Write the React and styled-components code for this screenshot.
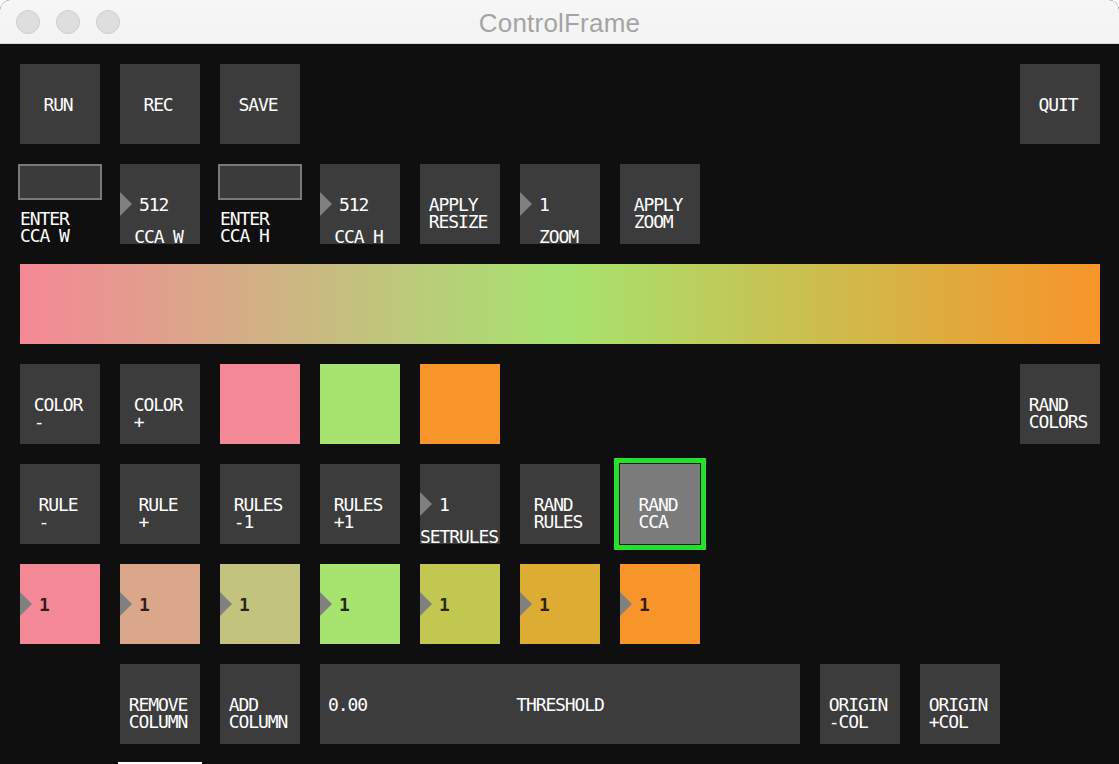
import React from "react";
import styled, { createGlobalStyle, css } from "styled-components";

const GlobalStyle = createGlobalStyle`
  html, body {
    margin: 0;
    padding: 0;
    background: #ffffff;
    overflow: hidden;
  }
  #root {
    width: 1119px;
    height: 764px;
  }
`;

const PIXEL_FONT = `"DejaVu Sans Mono", "Liberation Mono", monospace`;

const Window = styled.div`
  width: 1119px;
  height: 764px;
  display: flex;
  flex-direction: column;
  border-radius: 10px 10px 0 0;
  overflow: hidden;
  background: #0f0f0f;
`;

const TitleBar = styled.div`
  height: 43px;
  flex: none;
  border-bottom: 1px solid #d4d4d4;
  background: linear-gradient(#f6f6f6, #f3f3f3);
  display: grid;
  grid-template-columns: 1fr auto 1fr;
  align-items: center;
`;

const Lights = styled.div`
  display: flex;
  gap: 16px;
  padding-left: 16px;
`;

const Light = styled.span`
  width: 24px;
  height: 24px;
  box-sizing: border-box;
  border-radius: 50%;
  background: #dedede;
  border: 1px solid #cdcdcd;
`;

const Title = styled.div`
  font-family: "Liberation Sans", Arial, sans-serif;
  font-size: 26px;
  color: #a4a4a4;
  line-height: 1;
  padding-top: 2px;
  letter-spacing: 0.2px;
`;

const Canvas = styled.div`
  flex: 1;
  min-height: 0;
  padding: 20px 19px 0 20px;
  display: grid;
  grid-template-columns: repeat(11, 80px);
  grid-template-rows: repeat(8, 80px);
  gap: 20px;
`;

const place = css`
  grid-column: ${(p) => p.$col} / span ${(p) => p.$span || 1};
  grid-row: ${(p) => p.$row};
`;

const textStyle = css`
  font-family: ${PIXEL_FONT};
  font-size: 18px;
  letter-spacing: -1.1px;
  line-height: 17px;
  color: #ffffff;
`;

const Button = styled.div`
  ${place};
  ${textStyle};
  box-sizing: border-box;
  background: ${(p) => (p.$active ? "#7b7b7b" : "#3c3c3c")};
  padding: 32px 4px 0 0;
  display: flex;
  justify-content: center;
  align-items: flex-start;
  ${(p) =>
    p.$active &&
    css`
      box-shadow: 0 0 0 1px #1c1c1c, 0 0 0 6px #27e02b;
    `}
`;

const Label = styled.span`
  white-space: pre;
  text-align: left;
`;

const FieldCell = styled.div`
  ${place};
  display: flex;
  flex-direction: column;
`;

const Field = styled.div`
  height: 40px;
  box-sizing: border-box;
  margin: ${(p) => (p.$focused ? "-2px -2px 0" : "0 -2px")};
  background: #3b3b3b;
  border: 2px solid ${(p) => (p.$focused ? "#ffffff" : "#7a7a7a")};
`;

const FieldLabel = styled.div`
  ${textStyle};
  white-space: pre;
  margin-top: 10px;
`;

const NumberBox = styled.div`
  ${place};
  ${textStyle};
  background: ${(p) => p.$bg || "#3c3c3c"};
  display: flex;
  flex-direction: column;
`;

const NumberRow = styled.div`
  margin-top: 28px;
  height: 24px;
  display: flex;
  align-items: center;
  gap: 7px;
`;

const Arrow = styled.span`
  width: 0;
  height: 0;
  border-top: 12px solid transparent;
  border-bottom: 12px solid transparent;
  border-left: 12px solid #808080;
`;

const NumberValue = styled.span`
  line-height: 24px;
  padding-top: 1px;
  color: ${(p) => (p.$dark ? "rgba(15, 8, 8, 0.85)" : "#ffffff")};
  font-weight: ${(p) => (p.$dark ? 700 : 400)};
`;

const NumberLabel = styled.div`
  margin-top: auto;
  margin-bottom: -1px;
  padding-right: 3px;
  height: 17px;
  text-align: center;
  white-space: pre;
`;

const Gradient = styled.div`
  ${place};
  background: linear-gradient(to right, #f58896 0%, #a6e36f 50%, #f7942a 100%);
`;

const Swatch = styled.div`
  ${place};
  background: ${(p) => p.$bg};
`;

const Slider = styled.div`
  ${place};
  ${textStyle};
  background: #3c3c3c;
  display: grid;
  grid-template-columns: 1fr;
  align-items: start;
  padding-top: 32px;
  box-sizing: border-box;
`;

const SliderValue = styled.span`
  grid-area: 1 / 1;
  justify-self: start;
  padding-left: 8px;
`;

const SliderLabel = styled.span`
  grid-area: 1 / 1;
  justify-self: center;
`;

const Btn = ({ col, row, label, active }) => (
  <Button $col={col} $row={row} $active={active}>
    <Label>{label}</Label>
  </Button>
);

const Num = ({ col, row, value, label, bg }) => (
  <NumberBox $col={col} $row={row} $bg={bg}>
    <NumberRow>
      <Arrow />
      <NumberValue $dark={!!bg}>{value}</NumberValue>
    </NumberRow>
    {label && <NumberLabel>{label}</NumberLabel>}
  </NumberBox>
);

const TextField = ({ col, row, label, focused }) => (
  <FieldCell $col={col} $row={row}>
    <Field $focused={focused} />
    {label && <FieldLabel>{label}</FieldLabel>}
  </FieldCell>
);

const ruleColors = [
  "#f58896",
  "#daa78a",
  "#c2c47e",
  "#a6e36f",
  "#c2c84f",
  "#dcac33",
  "#f7942a",
];

export default function App() {
  return (
    <>
      <GlobalStyle />
      <Window>
        <TitleBar>
          <Lights>
            <Light />
            <Light />
            <Light />
          </Lights>
          <Title>ControlFrame</Title>
          <div />
        </TitleBar>
        <Canvas>
          <Btn col={1} row={1} label="RUN" />
          <Btn col={2} row={1} label="REC" />
          <Btn col={3} row={1} label="SAVE" />
          <Btn col={11} row={1} label="QUIT" />

          <TextField col={1} row={2} label={"ENTER\nCCA W"} />
          <Num col={2} row={2} value="512" label="CCA W" />
          <TextField col={3} row={2} label={"ENTER\nCCA H"} />
          <Num col={4} row={2} value="512" label="CCA H" />
          <Btn col={5} row={2} label={"APPLY\nRESIZE"} />
          <Num col={6} row={2} value="1" label="ZOOM" />
          <Btn col={7} row={2} label={"APPLY\nZOOM"} />

          <Gradient $col={1} $span={11} $row={3} />

          <Btn col={1} row={4} label={"COLOR\n-"} />
          <Btn col={2} row={4} label={"COLOR\n+"} />
          <Swatch $col={3} $row={4} $bg="#f58896" />
          <Swatch $col={4} $row={4} $bg="#a6e36f" />
          <Swatch $col={5} $row={4} $bg="#f7942a" />
          <Btn col={11} row={4} label={"RAND\nCOLORS"} />

          <Btn col={1} row={5} label={"RULE\n-"} />
          <Btn col={2} row={5} label={"RULE\n+"} />
          <Btn col={3} row={5} label={"RULES\n-1"} />
          <Btn col={4} row={5} label={"RULES\n+1"} />
          <Num col={5} row={5} value="1" label="SETRULES" />
          <Btn col={6} row={5} label={"RAND\nRULES"} />
          <Btn col={7} row={5} label={"RAND\nCCA"} active />

          {ruleColors.map((c, i) => (
            <Num key={c} col={i + 1} row={6} value="1" bg={c} />
          ))}

          <Btn col={2} row={7} label={"REMOVE\nCOLUMN"} />
          <Btn col={3} row={7} label={"ADD\nCOLUMN"} />
          <Slider $col={4} $span={5} $row={7}>
            <SliderValue>0.00</SliderValue>
            <SliderLabel>THRESHOLD</SliderLabel>
          </Slider>
          <Btn col={9} row={7} label={"ORIGIN\n-COL"} />
          <Btn col={10} row={7} label={"ORIGIN\n+COL"} />

          <TextField col={2} row={8} focused />
        </Canvas>
      </Window>
    </>
  );
}
